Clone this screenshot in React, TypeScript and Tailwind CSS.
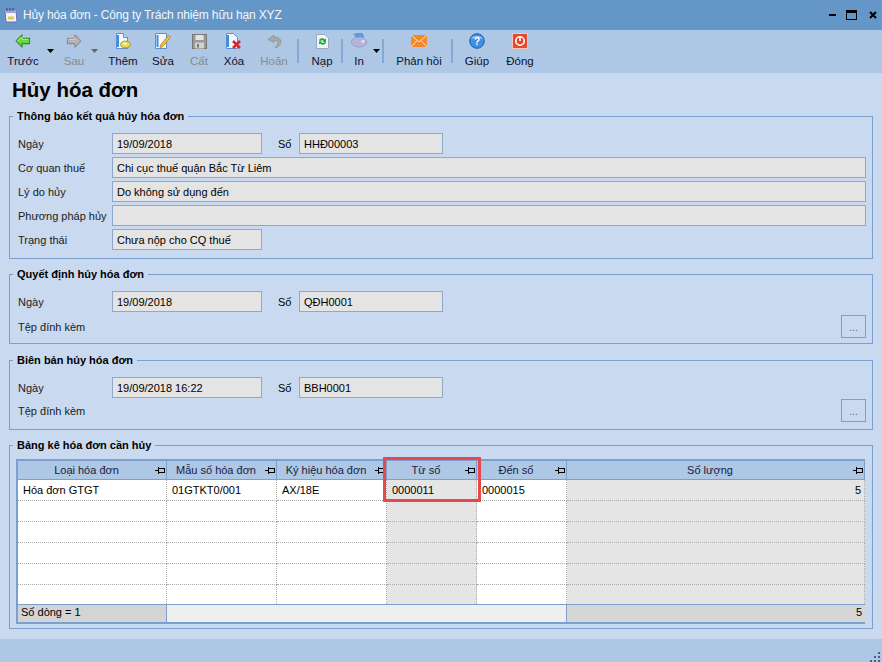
import React from "react";

const Pin = () => (
  <svg width="10" height="9" viewBox="0 0 10 9" className="shrink-0" fill="none" stroke="#000" strokeWidth="1" shapeRendering="crispEdges">
    <path d="M0 4.5H3M3.5 1V8M3.5 2.5H9.5V6.5H3.5" />
  </svg>
);

const Arrow = ({ cls, dim }: { cls: string; dim?: boolean }) => (
  <div className={`${cls} w-[8px] h-[4px] self-start mt-[19px] flex justify-center`}>
    <svg width="7" height="4" viewBox="0 0 7 4"><path d="M0 0H7L3.5 4Z" fill={dim ? "#666" : "#000"} /></svg>
  </div>
);

const Sep = ({ cls }: { cls: string }) => <div className={`${cls} w-[2px] h-[24px] self-start mt-[9px] bg-[#84a8d4]`} />;

const icons: Record<string, React.ReactNode> = {
  back: (
    <svg width="16" height="14" viewBox="0 0 18 16">
      <path d="M8 1L1 8L8 15V11H16.5V5H8Z" fill="#6bd63a" stroke="#2e8b1e" strokeWidth="1.2" strokeLinejoin="round" />
      <path d="M3 8L8 3V6H15" fill="none" stroke="#c8f5a8" strokeWidth="1" />
    </svg>
  ),
  next: (
    <svg width="16" height="14" viewBox="0 0 18 16">
      <path d="M10 1L17 8L10 15V11H1.5V5H10Z" fill="#b4b4b4" stroke="#8c8c8c" strokeWidth="1.2" strokeLinejoin="round" />
      <path d="M3 6H10V3.5" fill="none" stroke="#dedede" strokeWidth="1" />
    </svg>
  ),
  add: (
    <svg width="16" height="17" viewBox="0 0 16 17">
      <path d="M1.5 .5H8.5L12.5 4.5V15.5H1.5Z" fill="#f4f8fe" stroke="#5b8fd0" />
      <path d="M3 2V14" stroke="#3b8fe0" strokeWidth="2" />
      <path d="M8.5 .5V4.5H12.5" fill="#cfe0f5" stroke="#5b8fd0" />
      <ellipse cx="10.5" cy="11.5" rx="5" ry="3.4" fill="#e8d94a" stroke="#a99a20" />
      <ellipse cx="10" cy="10.8" rx="2.4" ry="1.2" fill="#fbf4a6" />
    </svg>
  ),
  edit: (
    <svg width="17" height="16" viewBox="0 0 17 16">
      <path d="M.5 .5H11.5V15.5H.5Z" fill="#f4f8fe" stroke="#5b8fd0" />
      <path d="M2.5 2V14" stroke="#3b8fe0" strokeWidth="2" />
      <path d="M5.5 12L5 14.5L7.5 14L15.5 4L13.5 2Z" fill="#f2bf3c" stroke="#b58418" strokeWidth=".8" />
    </svg>
  ),
  save: (
    <svg width="15" height="15" viewBox="0 0 15 15">
      <rect x=".5" y=".5" width="14" height="14" fill="#9a9a9a" stroke="#777" />
      <rect x="3.5" y="1" width="8" height="5" fill="#e4e4e4" />
      <rect x="3" y="8.5" width="9" height="6" fill="#d2d2d2" />
      <rect x="5" y="10" width="2" height="3.5" fill="#777" />
    </svg>
  ),
  del: (
    <svg width="16" height="16" viewBox="0 0 16 16">
      <path d="M.5 .5H7.5L11.5 4.5V15.5H.5Z" fill="#f4f8fe" stroke="#5b8fd0" />
      <path d="M2 2V14" stroke="#3b8fe0" strokeWidth="2" />
      <path d="M7 8L14 15M14 8L7 15" stroke="#d8262c" strokeWidth="2.6" />
    </svg>
  ),
  undo: (
    <svg width="15" height="15" viewBox="0 0 15 15" fill="none">
      <path d="M7 1L1 5.5L7 8.5V6.2C10.5 6 11.5 8 10.5 10.5L8 14C12.5 12.5 14.5 9.5 13.5 6C12.8 3.8 10 3 7 3.3Z" fill="#a8a8a8" stroke="#8c8c8c" strokeWidth=".7" />
    </svg>
  ),
  reload: (
    <svg width="13" height="15" viewBox="0 0 13 15">
      <path d="M.5 .5H9L12.5 4V14.5H.5Z" fill="#f2f5fb" stroke="#9aa8c8" />
      <path d="M3 6.5C3.5 4.2 7 3.5 8.8 5.5L10 4.5V8H6.6L7.8 7C6.6 5.8 5 6 4.4 7.2Z" fill="#1ca82c" />
      <path d="M10 8.5C9.5 10.8 6 11.5 4.2 9.5L3 10.5V7.5H6.4L5.2 8.2C6.4 9.4 8 9.2 8.6 8Z" fill="#1ca82c" />
    </svg>
  ),
  print: (
    <svg width="17" height="16" viewBox="0 0 17 16">
      <path d="M3 1L11 0L13 4H5Z" fill="#5aa0e0" stroke="#4a80b8" strokeWidth=".5" />
      <ellipse cx="8" cy="9" rx="7.6" ry="5" fill="#b7b4dc" stroke="#8f8cb8" strokeWidth=".6" />
      <ellipse cx="12" cy="8.5" rx="1.6" ry="1.4" fill="#e4e2f4" />
    </svg>
  ),
  mail: (
    <svg width="16" height="12" viewBox="0 0 16 12">
      <rect width="16" height="12" fill="#f28a2c" />
      <path d="M0 0L8 7L16 0M0 12L6 5.5M16 12L10 5.5" fill="none" stroke="#fde2c2" strokeWidth="1" />
    </svg>
  ),
  help: (
    <svg width="16" height="16" viewBox="0 0 16 16">
      <circle cx="8" cy="8" r="7.3" fill="#3f8fe4" stroke="#1d5fae" />
      <path d="M2 6C4 2 12 2 14 6C11 4.5 5 4.5 2 6Z" fill="#a5cdf5" />
      <text x="8" y="12" textAnchor="middle" fontSize="10" fontWeight="700" fill="#fff" fontFamily="Liberation Sans">?</text>
    </svg>
  ),
  close: (
    <svg width="16" height="16" viewBox="0 0 16 16">
      <rect x=".5" y=".5" width="15" height="15" fill="#e8492e" stroke="#f7c4b8" />
      <circle cx="8" cy="8" r="4.2" fill="none" stroke="#fff" strokeWidth="1.6" />
      <path d="M8 4V8" stroke="#fff" strokeWidth="1.6" />
    </svg>
  ),
};

const Tool = ({ cls, icon, label, dim }: { cls: string; icon: string; label: string; dim?: boolean }) => (
  <div className={`${cls} flex flex-col items-center shrink-0`}>
    <div className="h-[20px] flex items-center justify-center mt-[1px]">{icons[icon]}</div>
    <div className={`mt-[3px] text-[11.5px] leading-[15px] whitespace-nowrap ${dim ? "text-[#8a8a8a]" : "text-[#101030]"}`}>{label}</div>
  </div>
);

const Field = ({ cls, v }: { cls: string; v?: string }) => (
  <div className={`${cls} h-[21px] bg-[#e4e4e4] border border-[#8ca8cc] pl-[4px] text-[11px] leading-[20px] whitespace-nowrap`}>{v}</div>
);

const Label = ({ t }: { t: string }) => (
  <div className="w-[94px] shrink-0 pt-[1px] text-[11px] leading-[15px] whitespace-nowrap text-[#202020]">{t}</div>
);

const Group = ({ title, cls, children }: { title: string; cls: string; children: React.ReactNode }) => (
  <fieldset className={`${cls} mx-[9px] border border-[#7ba0d0] pl-[8px] pr-[6px] block`}>
    <legend className="-ml-[5px] px-[4px] text-[11px] leading-[15px] font-bold text-black whitespace-nowrap">{title}</legend>
    {children}
  </fieldset>
);

const DateSo = ({ date, so }: { date: string; so: string }) => (
  <div className="flex items-center h-[21px]">
    <Label t="Ngày" />
    <Field cls="w-[150px]" v={date} />
    <div className="w-[37px] pl-[16px] pt-[1px] text-[11px]">Số</div>
    <Field cls="w-[144px]" v={so} />
  </div>
);

const Attach = ({ cls }: { cls: string }) => (
  <div className={`${cls} flex items-center justify-between h-[23px]`}>
    <Label t="Tệp đính kèm" />
    <div className="w-[25px] h-[23px] border border-[#7ba0d0] flex items-center justify-center text-[10px] leading-none text-[#666] pt-[3px]">...</div>
  </div>
);

const cols = ["Loại hóa đơn", "Mẫu số hóa đơn", "Ký hiệu hóa đơn", "Từ số", "Đến số", "Số lượng"];
const row1 = ["Hóa đơn GTGT", "01GTKT0/001", "AX/18E", "0000011", "0000015", "5"];
const heights = ["h-[21px]", "h-[21px]", "h-[21px]", "h-[21px]", "h-[21px]", "h-[19px]"];

export default function App() {
  return (
    <div className="relative w-[882px] h-[662px] overflow-hidden flex flex-col bg-[#c9daf0] text-black [font-family:'Liberation_Sans',sans-serif]">
      {/* title bar */}
      <div className="h-[30px] shrink-0 bg-[#6496c8] flex items-center pl-[4px] pr-[5px]">
        <svg width="14" height="15" viewBox="0 0 14 15" className="shrink-0">
          <path d="M1 2H12L13 14H2Z" fill="#f4f4fa" stroke="#6a6ab8" />
          <path d="M1 2H12V5H1Z" fill="#a7a2de" />
          <path d="M3 0V3M6 0V3M9 0V3" stroke="#39407a" />
          <path d="M4 10H10" stroke="#e8c840" strokeWidth="3" />
        </svg>
        <div className="ml-[5px] text-[12px] tracking-[-0.15px] text-[#f2f6fb] whitespace-nowrap">Hủy hóa đơn - Công ty Trách nhiệm hữu hạn XYZ</div>
        <div className="ml-auto flex items-center">
          <div className="w-[7px] h-[2px] bg-black" />
          <div className="ml-[10px] w-[11px] h-[10px] border border-black border-t-[3px]" />
          <svg width="8" height="8" viewBox="0 0 8 8" className="ml-[12px]"><path d="M1 1L7 7M7 1L1 7" stroke="#000" strokeWidth="2" /></svg>
        </div>
      </div>
      {/* toolbar */}
      <div className="h-[43px] shrink-0 bg-[#adc7e5] flex pl-[4px]">
        <Tool cls="w-[38px]" icon="back" label="Trước" />
        <Arrow cls="ml-[4px]" />
        <Tool cls="w-[30px] ml-[5px]" icon="next" label="Sau" dim />
        <Arrow cls="ml-[1px]" dim />
        <Tool cls="w-[32px] ml-[9px]" icon="add" label="Thêm" />
        <Tool cls="w-[32px] ml-[8px]" icon="edit" label="Sửa" />
        <Tool cls="w-[28px] ml-[6px]" icon="save" label="Cất" dim />
        <Tool cls="w-[30px] ml-[6px]" icon="del" label="Xóa" />
        <Tool cls="w-[36px] ml-[7px]" icon="undo" label="Hoãn" dim />
        <Sep cls="ml-[5px]" />
        <Tool cls="w-[30px] ml-[8px]" icon="reload" label="Nạp" />
        <Sep cls="ml-[4px]" />
        <Tool cls="w-[24px] ml-[4px]" icon="print" label="In" />
        <Arrow cls="ml-[1px]" />
        <Sep cls="ml-[2px]" />
        <Tool cls="w-[56px] ml-[7px]" icon="mail" label="Phản hồi" />
        <Sep cls="ml-[4px]" />
        <Tool cls="w-[36px] ml-[6px]" icon="help" label="Giúp" />
        <Tool cls="w-[40px] ml-[5px]" icon="close" label="Đóng" />
      </div>
      {/* body */}
      <div className="flex-1 min-h-0">
        <h1 className="ml-[12px] h-[36px] pt-[4px] text-[20.5px] leading-[26px] font-bold">Hủy hóa đơn</h1>

        <Group title="Thông báo kết quả hủy hóa đơn" cls="h-[150px] pt-[9px]">
          <DateSo date="19/09/2018" so="HHĐ00003" />
          <div className="flex items-center mt-[3px]"><Label t="Cơ quan thuế" /><Field cls="flex-1" v="Chi cục thuế quận Bắc Từ Liêm" /></div>
          <div className="flex items-center mt-[3px]"><Label t="Lý do hủy" /><Field cls="flex-1" v="Do không sử dụng đến" /></div>
          <div className="flex items-center mt-[3px]"><Label t="Phương pháp hủy" /><Field cls="flex-1" /></div>
          <div className="flex items-center mt-[3px]"><Label t="Trạng thái" /><Field cls="w-[150px]" v="Chưa nộp cho CQ thuế" /></div>
        </Group>

        <Group title="Quyết định hủy hóa đơn" cls="h-[77px] mt-[8px] pt-[9px]">
          <DateSo date="19/09/2018" so="QĐH0001" />
          <Attach cls="mt-[3px]" />
        </Group>

        <Group title="Biên bản hủy hóa đơn" cls="h-[77px] mt-[9px] pt-[9px]">
          <DateSo date="19/09/2018 16:22" so="BBH0001" />
          <Attach cls="mt-[1px]" />
        </Group>

        <Group title="Bảng kê hóa đơn cần hủy" cls="h-[191px] mt-[8px] pt-[6px]">
          <div className="relative w-[849px] border-2 border-[#7ba0d0] border-r-0 -ml-[2px] text-[11px]">
            <div className="grid grid-cols-[149px_110px_110px_90px_90px_298px] h-[19px] bg-[#adc7e5] border-b border-[#7ba0d0]">
              {cols.map((c) => (
                <div key={c} className="relative flex items-center justify-center border-r border-[#7ba0d0] text-[#1a1a40] whitespace-nowrap pr-[11px]">
                  {c}
                  <span className="absolute right-[1px] top-[5px]"><Pin /></span>
                </div>
              ))}
            </div>
            {heights.map((h, r) => (
              <div key={r} className={`grid grid-cols-[149px_110px_110px_90px_90px_298px] ${h}`}>
                {cols.map((_, c) => {
                  const grey = c === 3 || c === 5;
                  return (
                    <div
                      key={c}
                      className={`border-r border-dotted border-r-[#aaaaaa] ${r < 5 ? "border-b border-b-[#aaaaaa] border-dotted" : ""} ${grey ? "bg-[#e5e5e5]" : "bg-white"} ${c === 5 ? "text-right pr-[3px]" : "pl-[5px]"} leading-[20px] whitespace-nowrap`}
                    >
                      {r === 0 ? row1[c] : ""}
                    </div>
                  );
                })}
              </div>
            ))}
            <div className="grid grid-cols-[149px_400px_298px] h-[18px] border-t border-[#7ba0d0] leading-[15px]">
              <div className="bg-[#d4d4d4] border-r border-[#7ba0d0] pl-[3px]">Số dòng = 1</div>
              <div className="bg-[#efefef] border-r border-[#7ba0d0]" />
              <div className="bg-[#d6d6d6] text-right pr-[3px]">5</div>
            </div>
            <div className="absolute left-[365px] top-[-4px] w-[98px] h-[45px] border-[3px] border-[#e8484a]" />
          </div>
        </Group>
      </div>
      {/* bottom bar */}
      <div className="relative h-[23px] shrink-0 bg-[#adc7e5]">
        <svg width="11" height="11" viewBox="0 0 11 11" className="absolute right-[1px] bottom-[0px]" fill="#3f5f88">
          <rect x="8" y="1" width="2" height="2" />
          <rect x="4" y="5" width="2" height="2" />
          <rect x="8" y="5" width="2" height="2" />
          <rect x="0" y="9" width="2" height="2" />
          <rect x="4" y="9" width="2" height="2" />
          <rect x="8" y="9" width="2" height="2" />
        </svg>
      </div>
    </div>
  );
}
